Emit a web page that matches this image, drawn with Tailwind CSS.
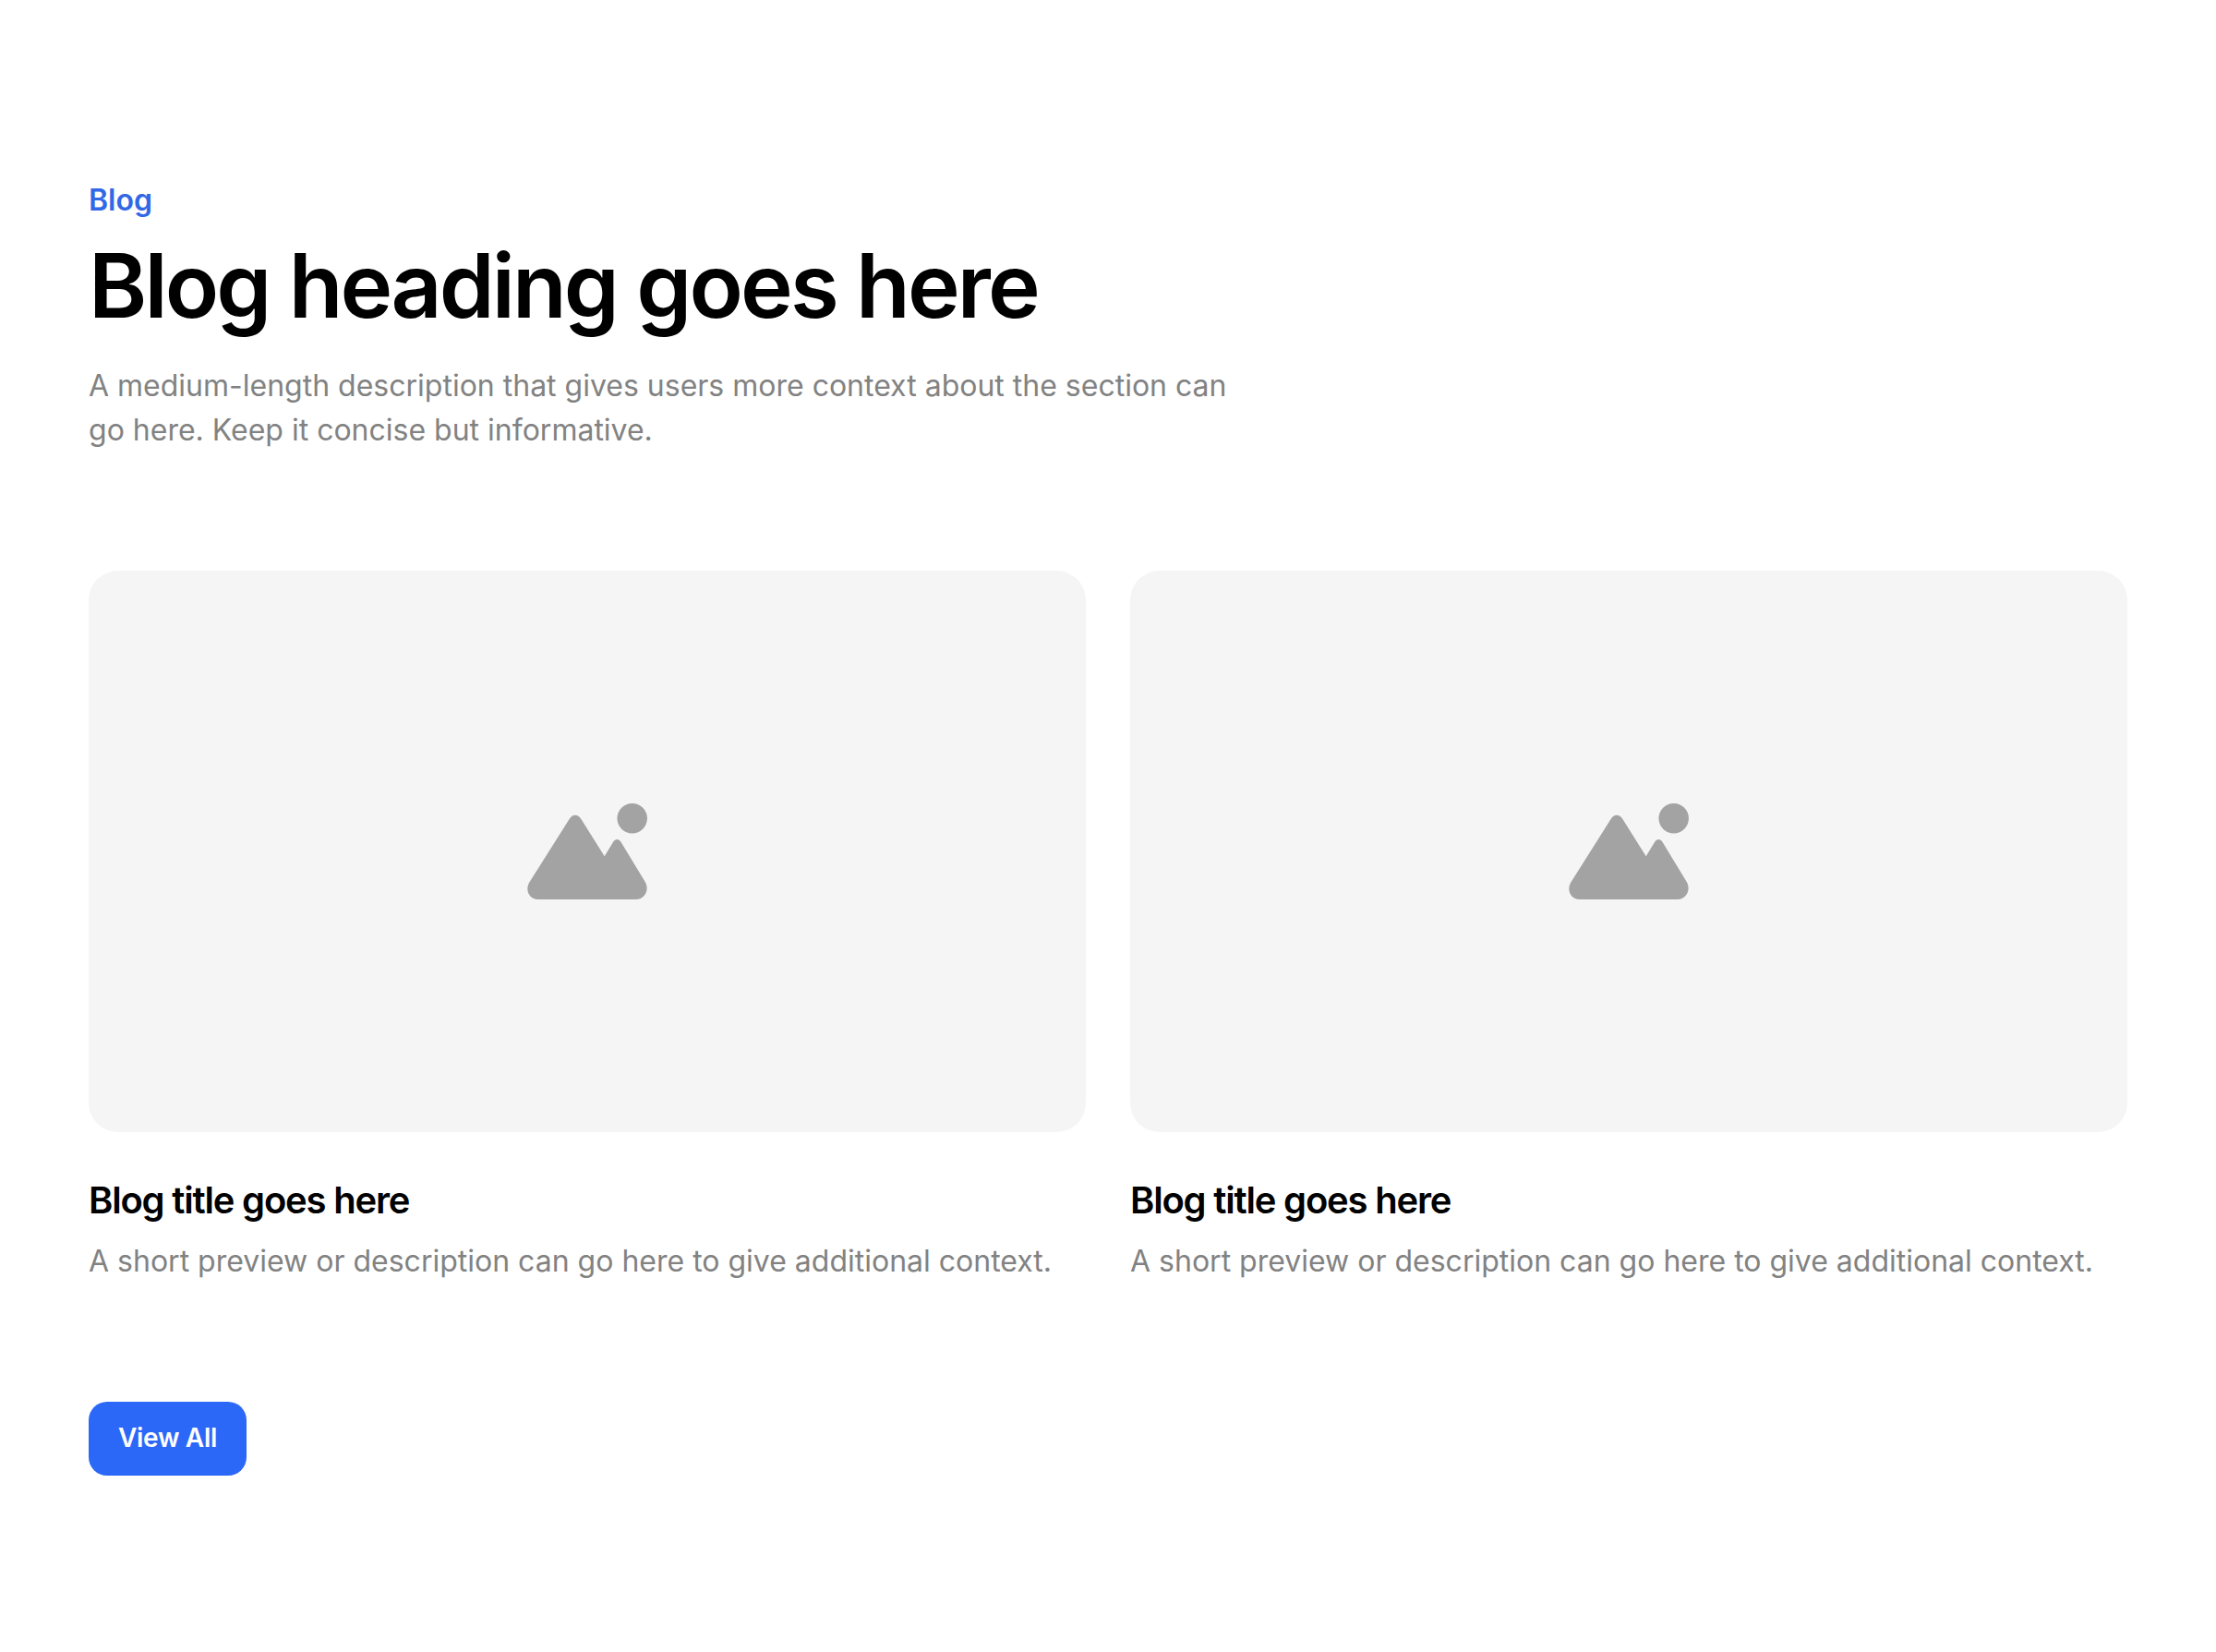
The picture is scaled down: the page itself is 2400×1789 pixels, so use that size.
<!DOCTYPE html>
<html lang="en">
<head>
    <meta charset="UTF-8">
    <meta name="viewport" content="width=device-width, initial-scale=1.0">
    <title>Blog</title>
    <script src="https://cdn.jsdelivr.net/npm/@tailwindcss/browser@4"></script>
</head>
<body class="bg-white font-['Inter',sans-serif] text-black">
    <section class="px-24 pt-[193px]">
        <div class="max-w-[1280px]">
            <p class="text-[32px] leading-[48px] font-semibold text-[#3268e6]">Blog</p>
            <h2 class="mt-5 text-[96px] leading-[96px] font-semibold tracking-[-0.03em]">Blog heading goes here</h2>
            <p class="mt-[37px] text-[32px] leading-[48px] text-[#828282]">A medium-length description that gives users more context about the section can<br>go here. Keep it concise but informative.</p>
        </div>
        <div class="mt-32 grid grid-cols-2 gap-12">
            <article>
                <div class="flex aspect-video items-center justify-center rounded-[32px] bg-[#f5f5f5]">
                    <svg class="h-[104px] w-[130px]" viewBox="0 0 130 104" fill="#a3a3a3">
                        <circle cx="113.700" cy="16.250" r="16.250"/>
                        <path d="M2 86 45.300 17.500C48.500 11.200 55.500 11.200 58.700 17.500L83.700 57.300 93.300 41.500C95.200 38 99.400 38 101.300 41.500L128 85.500C132.500 94 127 104 118 104H11.500C2.500 104-2.500 94.500 2 86Z"/>
                    </svg>
                </div>
                <h3 class="mt-12 text-[40px] leading-[52px] font-semibold tracking-[-0.03em]">Blog title goes here</h3>
                <p class="mt-4 text-[32px] leading-[48px] text-[#828282]">A short preview or description can go here to give additional context.</p>
            </article>
            <article>
                <div class="flex aspect-video items-center justify-center rounded-[32px] bg-[#f5f5f5]">
                    <svg class="h-[104px] w-[130px]" viewBox="0 0 130 104" fill="#a3a3a3">
                        <circle cx="113.700" cy="16.250" r="16.250"/>
                        <path d="M2 86 45.300 17.500C48.500 11.200 55.500 11.200 58.700 17.500L83.700 57.300 93.300 41.500C95.200 38 99.400 38 101.300 41.500L128 85.500C132.500 94 127 104 118 104H11.500C2.500 104-2.500 94.500 2 86Z"/>
                    </svg>
                </div>
                <h3 class="mt-12 text-[40px] leading-[52px] font-semibold tracking-[-0.03em]">Blog title goes here</h3>
                <p class="mt-4 text-[32px] leading-[48px] text-[#828282]">A short preview or description can go here to give additional context.</p>
            </article>
        </div>
        <a href="#" class="mt-32 inline-flex h-20 w-[171px] items-center justify-center rounded-[20px] bg-[#2c68f8] pb-0.5 text-[28px] font-semibold tracking-[-0.3px] text-white">View All</a>
    </section>
</body>
</html>
